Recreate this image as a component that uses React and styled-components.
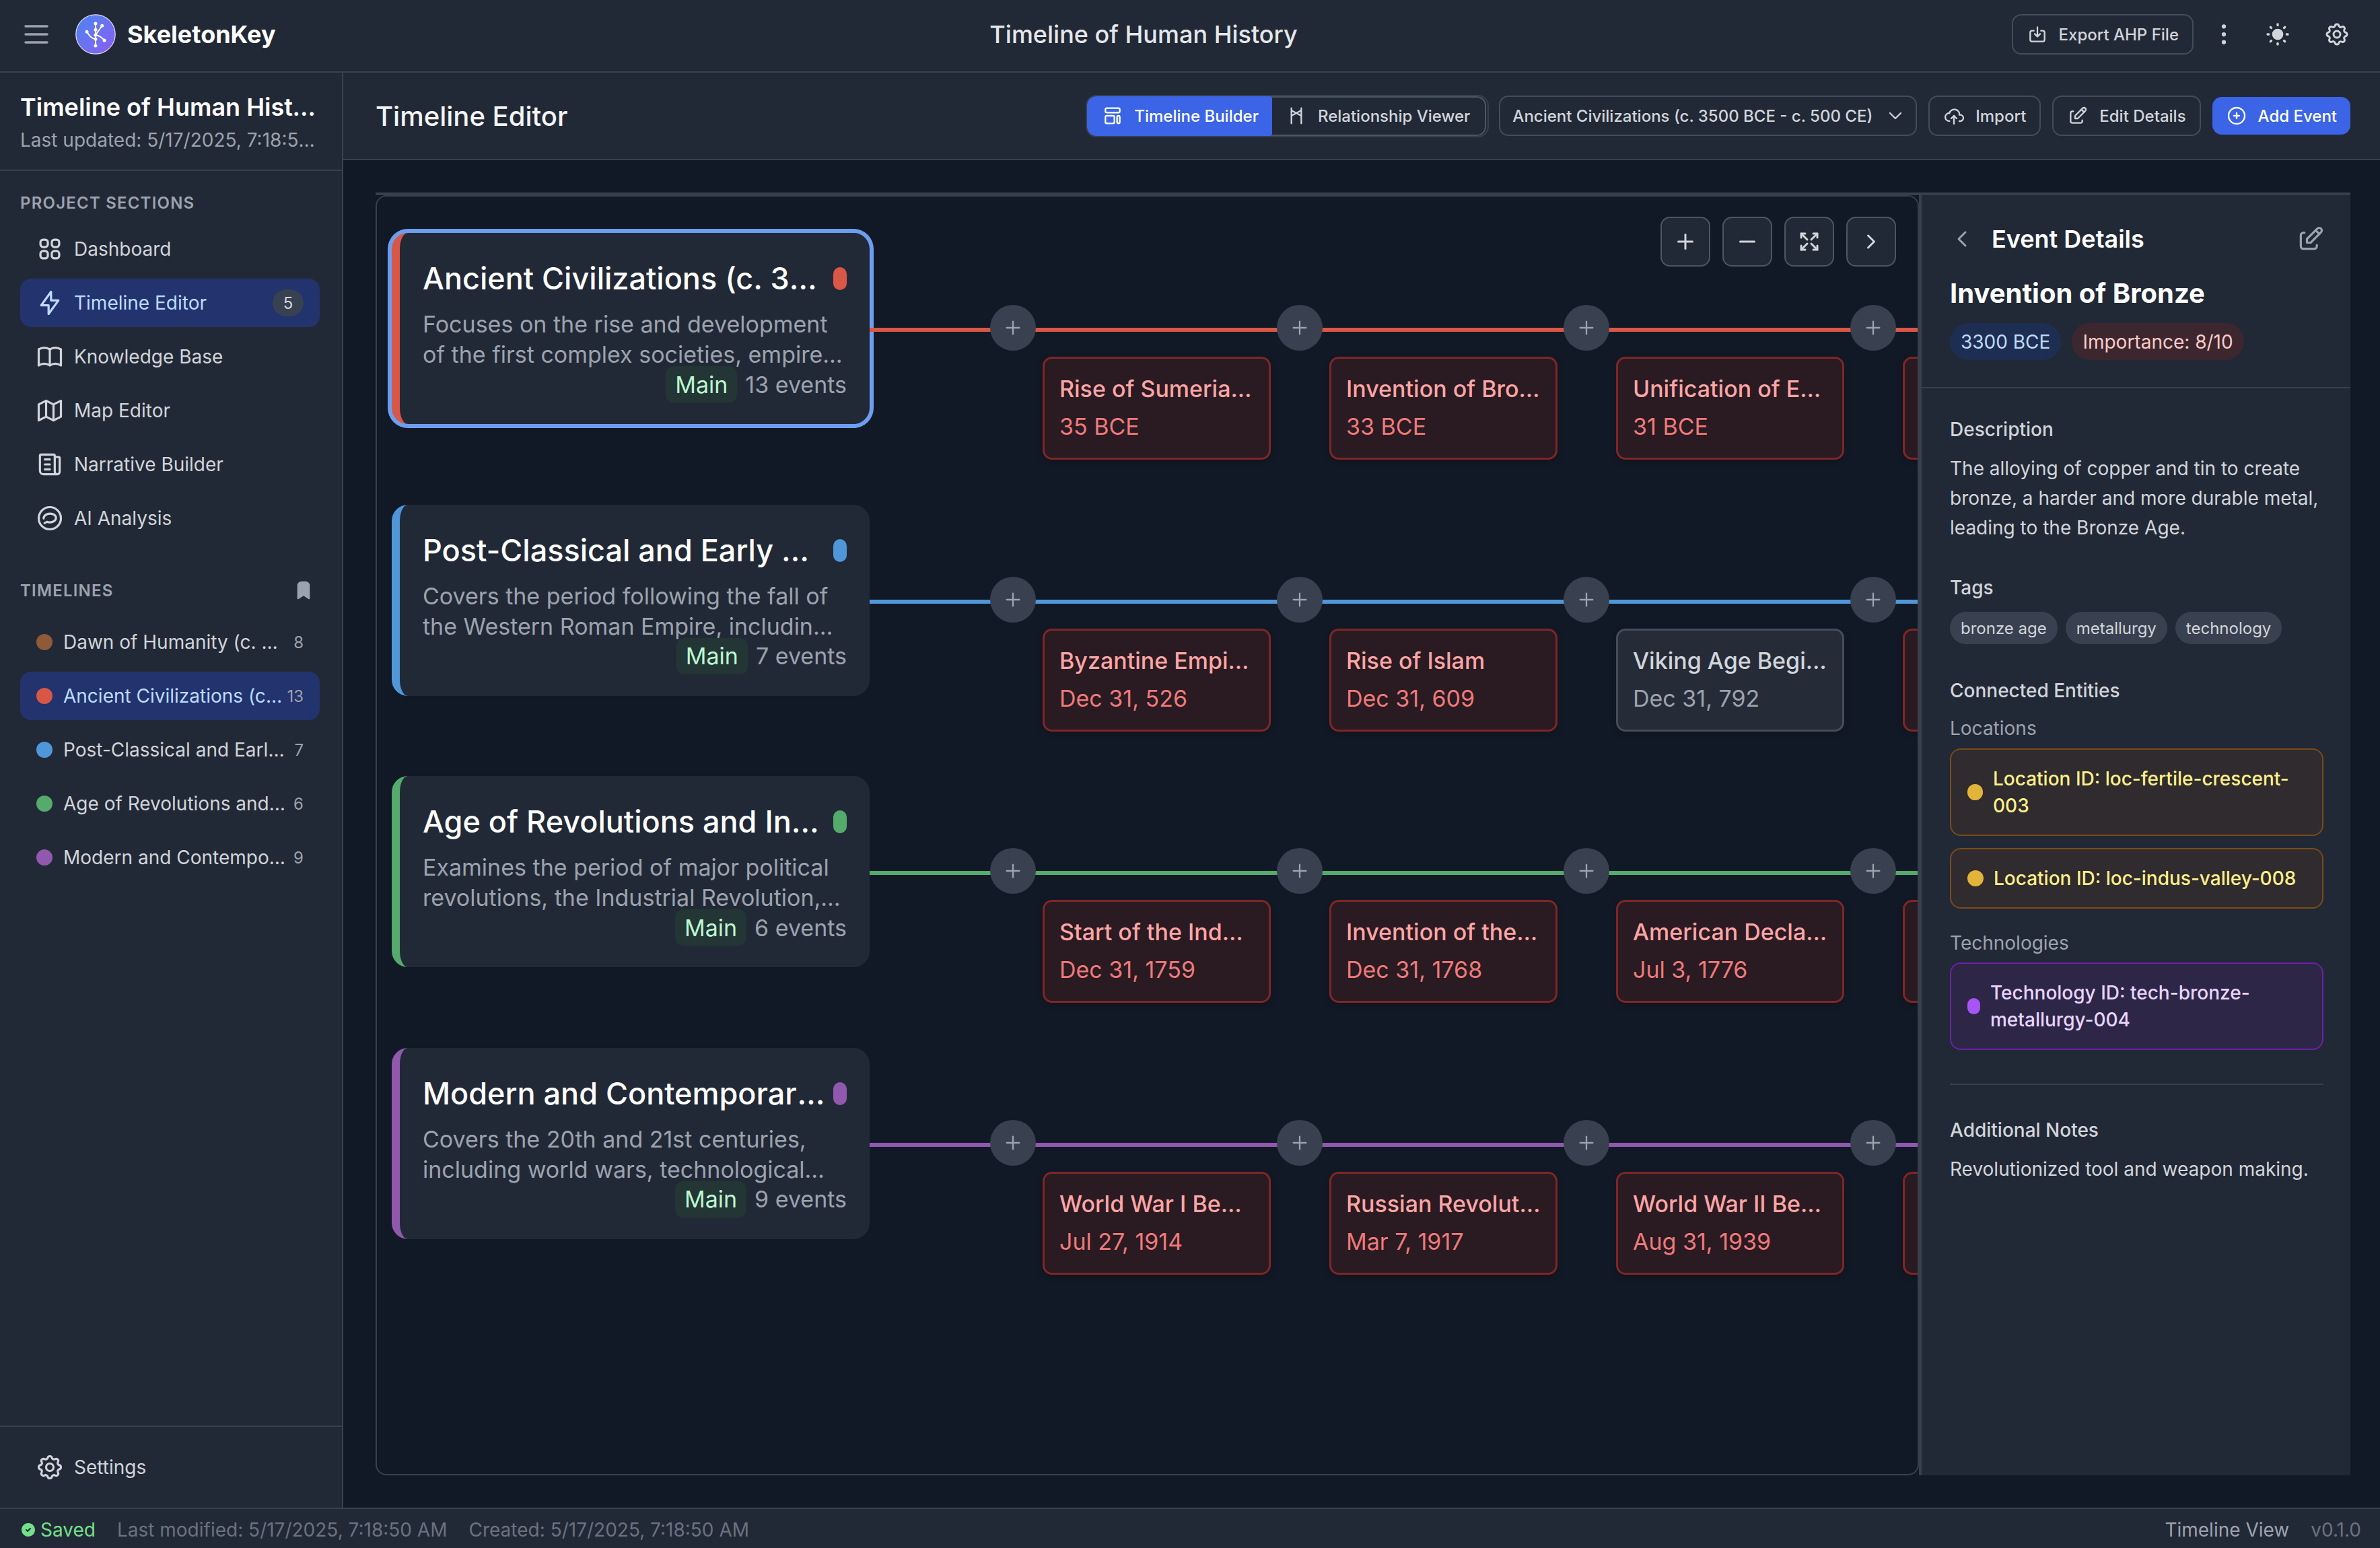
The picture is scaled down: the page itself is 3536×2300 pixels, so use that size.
import React from "react";
import styled, { createGlobalStyle } from "styled-components";
import {
  TbMenu2,
  TbBolt,
  TbBook,
  TbMap,
  TbNews,
  TbBookmarkFilled,
  TbSettings,
  TbDotsVertical,
  TbSunFilled,
  TbCloudUpload,
  TbEdit,
  TbCirclePlus,
  TbChevronDown,
  TbChevronLeft,
  TbChevronRight,
  TbPlus,
  TbMinus,
  TbArrowsMaximize,
  TbCircleCheckFilled,
} from "react-icons/tb";

const panel = "#222936";
const canvas = "#121926";
const line = "#383f4d";
const blue = "#3b64e6";
const activeBg = "#22336e";

const GlobalStyle = createGlobalStyle`
  html, body {
    margin: 0;
    padding: 0;
    background: ${canvas};
    font-family: Inter, "Noto Sans", sans-serif;
    overflow: hidden;
  }
  * {
    box-sizing: border-box;
  }
`;

const Shell = styled.div`
  display: flex;
  flex-direction: column;
  height: 100vh;
  width: 100%;
  color: #e5e7eb;
`;

const Header = styled.header`
  flex: 0 0 108px;
  display: flex;
  align-items: center;
  justify-content: space-between;
  padding: 0 16px 4px 30px;
  background: ${panel};
  border-bottom: 2px solid ${line};
`;

const Brand = styled.div`
  display: flex;
  align-items: center;
  color: #9ca3af;
`;

const LogoMark = styled.svg`
  width: 60px;
  height: 60px;
  margin: 0 17px 0 34px;
`;

const BrandName = styled.span`
  font-size: 36px;
  font-weight: 700;
  color: #fff;
`;

const ProjectTitle = styled.h1`
  margin: 0;
  font-size: 36px;
  font-weight: 500;
  color: #e5e7eb;
`;

const HeaderActions = styled.div`
  display: flex;
  align-items: center;
`;

const IconButton = styled.span`
  display: flex;
  align-items: center;
  justify-content: center;
  width: ${(p) => p.$w}px;
  color: #d1d5db;
`;

const Body = styled.div`
  flex: 1;
  display: flex;
  min-height: 0;
`;

const Sidebar = styled.aside`
  flex: 0 0 510px;
  min-width: 0;
  display: flex;
  flex-direction: column;
  background: ${panel};
  border-right: 2px solid ${line};
`;

const ProjectInfo = styled.div`
  height: 146px;
  padding: 26px 33px 0 30px;
  border-bottom: 2px solid ${line};
`;

const ProjectName = styled.div`
  font-size: 36px;
  line-height: 50px;
  font-weight: 600;
  color: #fff;
  white-space: nowrap;
  overflow: hidden;
  text-overflow: ellipsis;
`;

const ProjectMeta = styled.div`
  margin-top: 4px;
  font-size: 28px;
  line-height: 40px;
  color: #9ca3af;
  white-space: nowrap;
  overflow: hidden;
  text-overflow: ellipsis;
`;

const Section = styled.section`
  padding: ${(p) => p.$top}px 33px 0 30px;
`;

const SectionLabel = styled.div`
  display: flex;
  align-items: center;
  justify-content: space-between;
  height: 34px;
  padding-right: 8px;
  font-size: 24px;
  font-weight: 600;
  letter-spacing: 1.2px;
  text-transform: uppercase;
  color: #9ca3af;
`;

const NavList = styled.div`
  display: flex;
  flex-direction: column;
  gap: 8px;
  margin-top: ${(p) => p.$top}px;
`;

const NavItem = styled.div`
  display: flex;
  align-items: center;
  gap: 14px;
  height: 72px;
  padding: 0 24px 0 22px;
  border-radius: 16px;
  font-size: 28px;
  color: ${(p) => (p.$active ? "#bfdbfe" : "#d1d5db")};
  background: ${(p) => (p.$active ? activeBg : "transparent")};
`;

const NavText = styled.span`
  flex: 1;
  min-width: 0;
  white-space: nowrap;
  overflow: hidden;
  text-overflow: ellipsis;
`;

const CountBadge = styled.span`
  display: flex;
  align-items: center;
  justify-content: center;
  width: 46px;
  height: 40px;
  border-radius: 20px;
  background: #374151;
  font-size: 24px;
  color: #d1d5db;
`;

const TimelineItem = styled(NavItem)`
  padding: 0 24px;
  gap: 16px;
`;

const Swatch = styled.span`
  flex: 0 0 24px;
  height: 24px;
  border-radius: 50%;
  background: ${(p) => p.$color};
`;

const Count = styled.span`
  margin-left: -10px;
  font-size: 24px;
  color: #9ca3af;
`;

const SidebarFooter = styled.div`
  margin-top: auto;
  padding: 24px 33px 24px 30px;
  border-top: 2px solid ${line};
`;

const Main = styled.main`
  flex: 1;
  min-width: 0;
  display: flex;
  flex-direction: column;
`;

const Toolbar = styled.div`
  flex: 0 0 130px;
  display: flex;
  align-items: center;
  justify-content: space-between;
  padding: 0 44px 0 48px;
  background: ${panel};
  border-bottom: 2px solid ${line};
`;

const ToolbarTitle = styled.h2`
  margin: 0;
  font-size: 40px;
  font-weight: 500;
  color: #f3f4f6;
`;

const ToolbarActions = styled.div`
  display: flex;
  align-items: center;
  gap: 17px;
`;

const Segmented = styled.div`
  display: flex;
  height: 63px;
  padding: 2px;
  margin-right: -2px;
  border-radius: 16px;
  border: 2px solid ${line};
`;

const Segment = styled.div`
  display: flex;
  align-items: center;
  gap: 16px;
  padding: 0 ${(p) => (p.$active ? 20 : 22)}px 0 22px;
  font-size: 24px;
  font-weight: 500;
  margin: -2px 0 -2px -2px;
  color: ${(p) => (p.$active ? "#fff" : "#d1d5db")};
  background: ${(p) => (p.$active ? blue : "transparent")};
  border: ${(p) => (p.$active ? "0" : "2px solid #4b5563")};
  border-left: 0;
  border-radius: ${(p) => (p.$active ? "14px 0 0 14px" : "0 14px 14px 0")};
`;

const Button = styled.div`
  display: flex;
  align-items: center;
  gap: 16px;
  height: 60px;
  padding: 0 20px;
  border: 2px solid #444b59;
  border-radius: 14px;
  font-size: 24px;
  font-weight: 500;
  color: #d1d5db;
  white-space: nowrap;
`;

const ExportButton = styled(Button)`
  margin-right: 5px;
`;

const SelectButton = styled(Button)`
  gap: 18px;
  padding: 0 14px 0 18px;
`;

const PrimaryButton = styled(Button)`
  height: 56px;
  border: 0;
  color: #fff;
  background: ${blue};
`;

const Workspace = styled.div`
  flex: 1;
  min-height: 0;
  padding: 48px 44px 48px 48px;
  background: ${canvas};
`;

const Frame = styled.div`
  display: flex;
  height: 100%;
  border-top: 4px solid ${line};
`;

const Canvas = styled.div`
  position: relative;
  flex: 1;
  min-width: 0;
  display: flex;
  flex-direction: column;
  gap: 119.5px;
  padding: 54px 0 0 22px;
  border: 2px solid ${line};
  border-radius: 16px;
  overflow: hidden;
`;

const CanvasControls = styled.div`
  position: absolute;
  top: 30px;
  right: 32px;
  display: flex;
  gap: 18px;
  z-index: 2;
`;

const ControlButton = styled.div`
  display: flex;
  align-items: center;
  justify-content: center;
  width: 74px;
  height: 74px;
  background: ${panel};
  border: 2px solid #4b5563;
  border-radius: 14px;
  color: #d1d5db;
`;

const Row = styled.div`
  display: flex;
  height: 284px;
`;

const TrackCard = styled.div`
  flex: 0 0 710px;
  min-width: 0;
  display: flex;
  flex-direction: column;
  padding: 34px 34px 0;
  background: ${panel};
  border-left: 12px solid ${(p) => p.$color};
  border-radius: 24px;
  box-shadow: ${(p) => (p.$selected ? "0 0 0 6px #6c9ef0" : "none")};
`;

const TrackHead = styled.div`
  display: flex;
  align-items: center;
  gap: 10px;
  margin-bottom: 11px;
`;

const TrackTitle = styled.div`
  flex: 1;
  min-width: 0;
  font-size: 45px;
  line-height: 68px;
  font-weight: 500;
  color: #fff;
  white-space: nowrap;
  overflow: hidden;
  text-overflow: ellipsis;
`;

const TrackDot = styled.span`
  flex: 0 0 20px;
  height: 34px;
  border-radius: 10px;
  background: ${(p) => p.$color};
`;

const TrackDesc = styled.div`
  font-size: 34px;
  line-height: 45px;
  height: 90px;
  color: #9ca3af;
  display: -webkit-box;
  -webkit-line-clamp: 2;
  -webkit-box-orient: vertical;
  overflow: hidden;
`;

const TrackFoot = styled.div`
  display: flex;
  align-items: center;
  justify-content: flex-end;
  gap: 12px;
  margin-top: -5px;
  font-size: 34px;
  color: #9ca3af;
`;

const MainBadge = styled.span`
  display: flex;
  align-items: center;
  height: 54px;
  padding: 0 14px;
  border-radius: 12px;
  background: #233535;
  color: #bbf7d0;
`;

const Track = styled.div`
  flex: 1;
  min-width: 0;
  padding-top: 107px;
`;

const Rail = styled.div`
  position: relative;
  display: flex;
  gap: 358px;
  padding-left: 179px;
  &::before {
    content: "";
    position: absolute;
    left: 0;
    right: 0;
    top: 34px;
    height: 6px;
    background: ${(p) => p.$color};
  }
`;

const AddNode = styled.span`
  position: relative;
  flex: 0 0 68px;
  height: 68px;
  display: flex;
  align-items: center;
  justify-content: center;
  border-radius: 50%;
  background: #394150;
  color: #9ca3af;
`;

const EventRow = styled.div`
  display: flex;
  gap: 87px;
  padding-left: 257px;
  margin-top: 9px;
`;

const EventCard = styled.div`
  flex: 0 0 339px;
  min-width: 0;
  height: 153px;
  padding: 23px 22px 0;
  border: 3px solid ${(p) => (p.$muted ? "#454d5c" : "#7f2626")};
  border-radius: 14px;
  background: ${(p) => (p.$muted ? "#252c38" : "#2a1a22")};
  box-shadow: 0 4px 10px rgba(0, 0, 0, 0.18);
`;

const EventTitle = styled.div`
  font-size: 34px;
  line-height: 44px;
  font-weight: 500;
  color: ${(p) => (p.$muted ? "#d1d5db" : "#fca5a5")};
  white-space: nowrap;
  overflow: hidden;
  text-overflow: ellipsis;
`;

const EventDate = styled.div`
  margin-top: 12px;
  font-size: 34px;
  line-height: 44px;
  color: ${(p) => (p.$muted ? "#9ca3af" : "#ef7a7a")};
`;

const Details = styled.aside`
  flex: 0 0 641px;
  min-width: 0;
  background: ${panel};
  border-left: 4px solid ${line};
  display: flex;
  flex-direction: column;
`;

const DetailsHead = styled.div`
  padding: 43px 37px 40px 42px;
  border-bottom: 2px solid ${line};
`;

const DetailsBar = styled.div`
  display: flex;
  align-items: center;
  gap: 24px;
  height: 44px;
  color: #9ca3af;
`;

const DetailsHeading = styled.div`
  flex: 1;
  font-size: 36px;
  font-weight: 600;
  color: #fff;
`;

const EventName = styled.div`
  margin-top: 31px;
  font-size: 40px;
  line-height: 56px;
  font-weight: 700;
  color: #fff;
`;

const PillRow = styled.div`
  display: flex;
  gap: ${(p) => p.$gap}px;
  margin-top: 16px;
`;

const Pill = styled.span`
  display: flex;
  align-items: center;
  height: 55px;
  padding: 0 16px;
  border-radius: 28px;
  font-size: 28px;
  color: ${(p) => p.$color};
  background: ${(p) => p.$bg};
`;

const Tag = styled.span`
  display: flex;
  align-items: center;
  height: 48px;
  padding: 0 16px;
  border-radius: 24px;
  font-size: 24px;
  color: #d1d5db;
  background: #394150;
`;

const DetailsBody = styled.div`
  padding: 41px 40px 0 42px;
`;

const Heading = styled.div`
  margin-top: ${(p) => p.$top || 0}px;
  font-size: 28px;
  line-height: 40px;
  font-weight: 500;
  color: #d1d5db;
`;

const Copy = styled.p`
  margin: 16px 0 0;
  font-size: 28px;
  line-height: 44px;
  color: #d1d5db;
`;

const SubHeading = styled.div`
  margin: ${(p) => p.$top}px 0 ${(p) => p.$bottom}px;
  font-size: 28px;
  line-height: 40px;
  color: #9ca3af;
`;

const EntityCard = styled.div`
  display: flex;
  align-items: center;
  gap: 15px;
  padding: 23px 24px;
  margin-bottom: ${(p) => p.$bottom || 0}px;
  border: 2px solid ${(p) => p.$border};
  border-radius: 16px;
  background: ${(p) => p.$bg};
  color: ${(p) => p.$color};
  font-size: 28px;
  line-height: 40px;
  font-weight: 500;
`;

const EntityDot = styled.span`
  flex: 0 0 ${(p) => p.$w}px;
  height: 24px;
  border-radius: 12px;
  background: ${(p) => p.$color};
`;

const Divider = styled.hr`
  margin: 50px 0 0;
  border: 0;
  border-top: 2px solid ${line};
`;

const StatusBar = styled.footer`
  flex: 0 0 60px;
  display: flex;
  align-items: center;
  gap: 32px;
  padding: 4px 28px 0 30px;
  font-size: 28px;
  color: #6b7280;
  background: ${panel};
  border-top: 2px solid ${line};
`;

const SavedFlag = styled.span`
  display: flex;
  align-items: center;
  gap: 6px;
  color: #74e08a;
`;

const StatusRight = styled.span`
  margin-left: auto;
  display: flex;
  gap: 32px;
`;

const ViewName = styled.span`
  color: #9ca3af;
`;

const BackIcon = styled(TbChevronLeft)`
  margin-left: -2px;
`;

const SW = 1.75;

const Logo = () => (
  <LogoMark viewBox="0 0 60 60">
    <defs>
      <linearGradient id="logoFill" x1="0" y1="0" x2="1" y2="1">
        <stop offset="0" stopColor="#4c86f2" />
        <stop offset="1" stopColor="#8b5cf0" />
      </linearGradient>
    </defs>
    <circle cx="30" cy="30" r="29.2" fill="url(#logoFill)" stroke="#dfe3ee" strokeWidth="1.2" />
    <g fill="none" stroke="#fff" strokeWidth="1.9" strokeLinecap="round">
      <path d="M30 14V47" />
      <path d="M30 31L39.5 17.5" />
      <path d="M30 31c6 1 9 3 13 8" />
      <path d="M17 26c4 7 7 10 13 11" />
    </g>
    <g fill="#fff">
      <circle cx="30" cy="14" r="2.5" />
      <circle cx="39.7" cy="17.3" r="2.5" />
      <circle cx="30" cy="23.3" r="2.5" />
      <circle cx="17" cy="26.3" r="2.5" />
      <circle cx="30" cy="31" r="2.5" />
      <circle cx="30" cy="37" r="2.5" />
      <circle cx="43" cy="39" r="2.5" />
      <circle cx="30" cy="47" r="2.5" />
    </g>
  </LogoMark>
);

const DashboardIcon = () => (
  <svg width="44" height="44" viewBox="0 0 24 24" fill="none" stroke="currentColor" strokeWidth={SW}>
    <rect x="4.4" y="4.4" width="6" height="6" rx="2.2" />
    <rect x="13.6" y="4.4" width="6" height="6" rx="2.2" />
    <rect x="4.4" y="13.6" width="6" height="6" rx="2.2" />
    <rect x="13.6" y="13.6" width="6" height="6" rx="2.2" />
  </svg>
);

const AiIcon = () => (
  <svg width="44" height="44" viewBox="0 0 24 24" fill="none" stroke="currentColor" strokeWidth={SW} strokeLinecap="round" strokeLinejoin="round">
    <circle cx="12" cy="12" r="9" />
    <path d="M7 12.2c0-2.3 2.4-4 5.2-4 2.7 0 4.8 1.5 4.8 3.5s-2.2 3.6-5 3.6c-.8 0-1.6-.1-2.3-.4l-1.9 1" />
  </svg>
);

const ExportIcon = () => (
  <svg width="32" height="32" viewBox="0 0 24 24" fill="none" stroke="currentColor" strokeWidth={SW} strokeLinecap="round" strokeLinejoin="round">
    <path d="M8 8H6a2 2 0 0 0-2 2v8a2 2 0 0 0 2 2h12a2 2 0 0 0 2-2v-8a2 2 0 0 0-2-2h-2" />
    <path d="M12 4v10M9 11.5l3 3 3-3" />
  </svg>
);

const BuilderIcon = () => (
  <svg width="32" height="32" viewBox="0 0 24 24" fill="none" stroke="currentColor" strokeWidth={SW} strokeLinejoin="round">
    <rect x="4" y="3.5" width="16" height="5" rx="1.5" />
    <rect x="4" y="12" width="10" height="8.5" rx="1.5" />
    <rect x="17" y="12" width="3" height="8.5" rx="1.5" />
  </svg>
);

const RelationIcon = () => (
  <svg width="32" height="32" viewBox="0 0 24 24" fill="none" stroke="currentColor" strokeWidth={SW} strokeLinecap="round">
    <path d="M6.5 3.5v17M17.5 3.5v17M6.5 6l11 6M17.5 6l-11 6" />
  </svg>
);

const sections = [
  { label: "Dashboard", Icon: DashboardIcon },
  { label: "Timeline Editor", Icon: TbBolt, active: true, count: 5 },
  { label: "Knowledge Base", Icon: TbBook },
  { label: "Map Editor", Icon: TbMap },
  { label: "Narrative Builder", Icon: TbNews },
  { label: "AI Analysis", Icon: AiIcon },
];

const timelineList = [
  { label: "Dawn of Humanity (c. Mya - c. 3500 BCE)", color: "#8f5a38", count: 8 },
  { label: "Ancient Civilizations (c. 3500 BCE - c. 500 CE)", color: "#d95747", count: 13, active: true },
  { label: "Post-Classical and Early Modern Era (c. 500 CE)", color: "#4f97d9", count: 7 },
  { label: "Age of Revolutions and Industry (c. 1750)", color: "#54ab6b", count: 6 },
  { label: "Modern and Contemporary Era (c. 1914)", color: "#9159ae", count: 9 },
];

const tracks = [
  {
    title: "Ancient Civilizations (c. 3500 BCE - c. 500 CE)",
    desc: "Focuses on the rise and development of the first complex societies, empires, and cultures across the ancient world.",
    color: "#d95747",
    count: 13,
    selected: true,
    events: [
      { title: "Rise of Sumerian City-States", date: "35 BCE" },
      { title: "Invention of Bronze", date: "33 BCE" },
      { title: "Unification of Egypt", date: "31 BCE" },
    ],
  },
  {
    title: "Post-Classical and Early Modern Era (c. 500 CE)",
    desc: "Covers the period following the fall of the Western Roman Empire, including the rise of new powers and trade routes.",
    color: "#4f97d9",
    count: 7,
    events: [
      { title: "Byzantine Empire Flourishes", date: "Dec 31, 526" },
      { title: "Rise of Islam", date: "Dec 31, 609" },
      { title: "Viking Age Begins in Europe", date: "Dec 31, 792", muted: true },
    ],
  },
  {
    title: "Age of Revolutions and Industry (c. 1750)",
    desc: "Examines the period of major political revolutions, the Industrial Revolution, and the spread of empires worldwide.",
    color: "#54ab6b",
    count: 6,
    events: [
      { title: "Start of the Industrial Revolution", date: "Dec 31, 1759" },
      { title: "Invention of the Steam Engine", date: "Dec 31, 1768" },
      { title: "American Declaration", date: "Jul 3, 1776" },
    ],
  },
  {
    title: "Modern and Contemporary Era (c. 1914)",
    desc: "Covers the 20th and 21st centuries, including world wars, technological advancements and the modern globalized era.",
    color: "#9159ae",
    count: 9,
    events: [
      { title: "World War I Begins", date: "Jul 27, 1914" },
      { title: "Russian Revolution", date: "Mar 7, 1917" },
      { title: "World War II Begins", date: "Aug 31, 1939" },
    ],
  },
];

export default function App() {
  return (
    <Shell>
      <GlobalStyle />
      <Header>
        <Brand>
          <TbMenu2 size={48} strokeWidth={SW} />
          <Logo />
          <BrandName>SkeletonKey</BrandName>
        </Brand>
        <ProjectTitle>Timeline of Human History</ProjectTitle>
        <HeaderActions>
          <ExportButton>
            <ExportIcon />
            Export AHP File
          </ExportButton>
          <IconButton $w={80}>
            <TbDotsVertical size={40} strokeWidth={SW} />
          </IconButton>
          <IconButton $w={80}>
            <TbSunFilled size={40} />
          </IconButton>
          <IconButton $w={96}>
            <TbSettings size={40} strokeWidth={SW} />
          </IconButton>
        </HeaderActions>
      </Header>
      <Body>
        <Sidebar>
          <ProjectInfo>
            <ProjectName>Timeline of Human History</ProjectName>
            <ProjectMeta>Last updated: 5/17/2025, 7:18:50 AM</ProjectMeta>
          </ProjectInfo>
          <Section $top={30}>
            <SectionLabel>Project Sections</SectionLabel>
            <NavList $top={16}>
              {sections.map(({ label, Icon, active, count }) => (
                <NavItem key={label} $active={active}>
                  <Icon size={44} strokeWidth={SW} />
                  <NavText>{label}</NavText>
                  {count && <CountBadge>{count}</CountBadge>}
                </NavItem>
              ))}
            </NavList>
          </Section>
          <Section $top={54}>
            <SectionLabel>
              Timelines
              <TbBookmarkFilled size={32} />
            </SectionLabel>
            <NavList $top={24}>
              {timelineList.map((t) => (
                <TimelineItem key={t.label} $active={t.active}>
                  <Swatch $color={t.color} />
                  <NavText>{t.label}</NavText>
                  <Count>{t.count}</Count>
                </TimelineItem>
              ))}
            </NavList>
          </Section>
          <SidebarFooter>
            <NavItem>
              <TbSettings size={44} strokeWidth={SW} />
              <NavText>Settings</NavText>
            </NavItem>
          </SidebarFooter>
        </Sidebar>
        <Main>
          <Toolbar>
            <ToolbarTitle>Timeline Editor</ToolbarTitle>
            <ToolbarActions>
              <Segmented>
                <Segment $active>
                  <BuilderIcon />
                  Timeline Builder
                </Segment>
                <Segment>
                  <RelationIcon />
                  Relationship Viewer
                </Segment>
              </Segmented>
              <SelectButton>
                Ancient Civilizations (c. 3500 BCE - c. 500 CE)
                <TbChevronDown size={32} strokeWidth={SW} />
              </SelectButton>
              <Button>
                <TbCloudUpload size={32} strokeWidth={SW} />
                Import
              </Button>
              <Button>
                <TbEdit size={32} strokeWidth={SW} />
                Edit Details
              </Button>
              <PrimaryButton>
                <TbCirclePlus size={32} strokeWidth={SW} />
                Add Event
              </PrimaryButton>
            </ToolbarActions>
          </Toolbar>
          <Workspace>
            <Frame>
              <Canvas>
                <CanvasControls>
                  <ControlButton>
                    <TbPlus size={36} />
                  </ControlButton>
                  <ControlButton>
                    <TbMinus size={36} />
                  </ControlButton>
                  <ControlButton>
                    <TbArrowsMaximize size={36} />
                  </ControlButton>
                  <ControlButton>
                    <TbChevronRight size={36} />
                  </ControlButton>
                </CanvasControls>
                {tracks.map((t) => (
                  <Row key={t.title}>
                    <TrackCard $color={t.color} $selected={t.selected}>
                      <TrackHead>
                        <TrackTitle>{t.title}</TrackTitle>
                        <TrackDot $color={t.color} />
                      </TrackHead>
                      <TrackDesc>{t.desc}</TrackDesc>
                      <TrackFoot>
                        <MainBadge>Main</MainBadge>
                        {t.count} events
                      </TrackFoot>
                    </TrackCard>
                    <Track>
                      <Rail $color={t.color}>
                        {[0, 1, 2, 3].map((i) => (
                          <AddNode key={i}>
                            <TbPlus size={32} strokeWidth={SW} />
                          </AddNode>
                        ))}
                      </Rail>
                      <EventRow>
                        {t.events.map((e) => (
                          <EventCard key={e.title} $muted={e.muted}>
                            <EventTitle $muted={e.muted}>{e.title}</EventTitle>
                            <EventDate $muted={e.muted}>{e.date}</EventDate>
                          </EventCard>
                        ))}
                        <EventCard />
                      </EventRow>
                    </Track>
                  </Row>
                ))}
              </Canvas>
              <Details>
                <DetailsHead>
                  <DetailsBar>
                    <BackIcon size={40} strokeWidth={SW} />
                    <DetailsHeading>Event Details</DetailsHeading>
                    <TbEdit size={44} strokeWidth={SW} />
                  </DetailsBar>
                  <EventName>Invention of Bronze</EventName>
                  <PillRow $gap={16}>
                    <Pill $bg="#1e2e52" $color="#bfdbfe">3300 BCE</Pill>
                    <Pill $bg="#3d272e" $color="#fecaca">Importance: 8/10</Pill>
                  </PillRow>
                </DetailsHead>
                <DetailsBody>
                  <Heading>Description</Heading>
                  <Copy>
                    The alloying of copper and tin to create bronze, a harder and more durable metal, leading to the Bronze Age.
                  </Copy>
                  <Heading $top={47}>Tags</Heading>
                  <PillRow $gap={12}>
                    <Tag>bronze age</Tag>
                    <Tag>metallurgy</Tag>
                    <Tag>technology</Tag>
                  </PillRow>
                  <Heading $top={49}>Connected Entities</Heading>
                  <SubHeading $top={16} $bottom={10}>Locations</SubHeading>
                  <EntityCard $border="#7a4a1a" $bg="#2f2b2e" $color="#fef08a" $bottom={18}>
                    <EntityDot $w={23} $color="#e3b43a" />
                    Location ID: loc-fertile-crescent-003
                  </EntityCard>
                  <EntityCard $border="#7a4a1a" $bg="#2f2b2e" $color="#fef08a">
                    <EntityDot $w={24} $color="#e3b43a" />
                    Location ID: loc-indus-valley-008
                  </EntityCard>
                  <SubHeading $top={31} $bottom={9}>Technologies</SubHeading>
                  <EntityCard $border="#6b21a8" $bg="#2e2647" $color="#e9d5ff">
                    <EntityDot $w={19} $color="#a855f7" />
                    Technology ID: tech-bronze-metallurgy-004
                  </EntityCard>
                  <Divider />
                  <Heading $top={47}>Additional Notes</Heading>
                  <Copy>Revolutionized tool and weapon making.</Copy>
                </DetailsBody>
              </Details>
            </Frame>
          </Workspace>
        </Main>
      </Body>
      <StatusBar>
        <SavedFlag>
          <TbCircleCheckFilled size={24} />
          Saved
        </SavedFlag>
        <span>Last modified: 5/17/2025, 7:18:50 AM</span>
        <span>Created: 5/17/2025, 7:18:50 AM</span>
        <StatusRight>
          <ViewName>Timeline View</ViewName>
          <span>v0.1.0</span>
        </StatusRight>
      </StatusBar>
    </Shell>
  );
}
